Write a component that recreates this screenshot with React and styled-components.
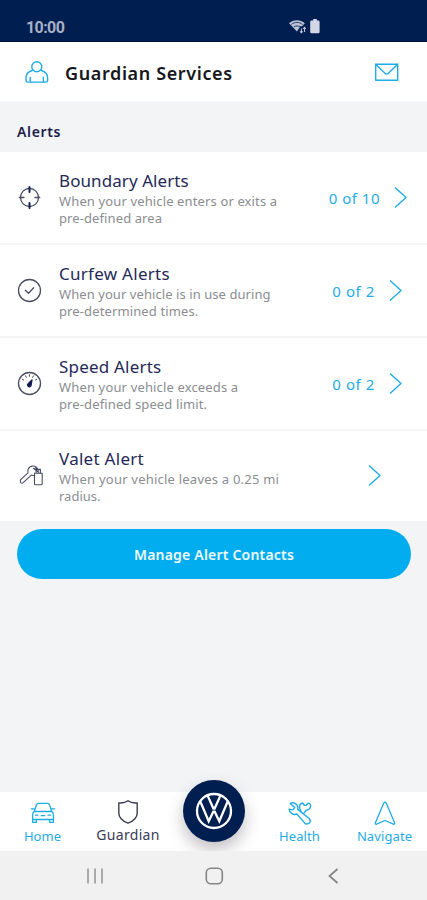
import React from "react";
import styled, { createGlobalStyle } from "styled-components";

const GlobalStyle = createGlobalStyle`
  * { box-sizing: border-box; }
  body { margin: 0; font-family: "Noto Sans", "Open Sans", sans-serif; }
`;

const blue = "#1face6";
const navy = "#001e50";

const Screen = styled.div`
  display: flex;
  flex-direction: column;
  width: 427px;
  height: 900px;
  background: #f2f4f6;
  overflow: hidden;
`;

const StatusBar = styled.header`
  display: flex;
  align-items: center;
  gap: 3px;
  height: 42px;
  padding: 12px 107px 0 26px;
  background: ${navy};
  border-bottom: 1px solid #00103c;
`;

const Clock = styled.span`
  flex: 1;
  padding-top: 2px;
  font: 700 16px/20px Roboto, sans-serif;
  letter-spacing: -0.6px;
  color: #a9b0c6;
`;

const Header = styled.div`
  display: flex;
  align-items: center;
  height: 60px;
  padding: 0 27px 0 24px;
  background: #fff;
  border-bottom: 1px solid #f7f8f9;
`;

const Title = styled.h1`
  flex: 1;
  margin: 2px 0 0 16px;
  font-size: 18px;
  line-height: 24px;
  font-weight: 600;
  letter-spacing: 0.62px;
  color: #15171c;
`;

const SectionTitle = styled.h2`
  height: 50px;
  margin: 0;
  padding: 20px 17px 0;
  font-size: 14px;
  line-height: 20px;
  font-weight: 600;
  letter-spacing: 0.65px;
  color: #1b1d4c;
`;

const Row = styled.section`
  display: flex;
  align-items: center;
  height: ${(p) => p.$height}px;
  padding: 0 ${(p) => p.$right}px 0 17px;
  background: #fff;
  border-bottom: ${(p) => (p.$last ? 0 : 2)}px solid #f4f5f7;
`;

const RowIcon = styled.div`
  display: flex;
  width: 42px;
  padding-bottom: 1px;
  color: #4a4e63;
`;

const RowText = styled.div`
  flex: 1;
  white-space: nowrap;
`;

const RowTitle = styled.h3`
  margin: 0;
  font-size: 17px;
  line-height: 24px;
  font-weight: 400;
  letter-spacing: ${(p) => p.$track}px;
  color: #252957;
`;

const RowLine = styled.div`
  font-size: 13px;
  line-height: 17px;
  letter-spacing: ${(p) => p.$track}px;
  color: #8b8d91;
`;

const Count = styled.span`
  margin-right: 14px;
  font-size: 15px;
  line-height: 20px;
  letter-spacing: ${(p) => p.$track}px;
  color: ${blue};
`;

const ManageButton = styled.button`
  height: 50px;
  margin: 8px 16px 0 17px;
  padding: 1px 0 0;
  border: 0;
  border-radius: 25px;
  background: #02adef;
  color: #effaff;
  font: 600 14px/20px "Noto Sans", sans-serif;
  letter-spacing: 0.2px;
`;

const TabBar = styled.nav`
  display: grid;
  grid-template-columns: 85px 86px 86px 85px 85px;
  height: 59px;
  margin-top: auto;
  background: #fff;
`;

const Tab = styled.a`
  display: flex;
  flex-direction: column;
  align-items: center;
  padding-top: ${(p) => (p.$active ? 7 : 8)}px;
  color: ${(p) => (p.$active ? "#3a3d55" : blue)};
`;

const TabLabel = styled.span`
  margin-top: 1px;
  font-size: ${(p) => p.$size}px;
  line-height: 18px;
  letter-spacing: ${(p) => p.$track}px;
  white-space: nowrap;
`;

const LogoButton = styled.div`
  justify-self: center;
  display: flex;
  align-items: center;
  justify-content: center;
  width: 62px;
  height: 62px;
  margin-top: -12px;
  border-radius: 50%;
  background: ${navy};
  box-shadow: 0 8px 16px rgba(60, 45, 55, 0.3);
`;

const SystemBar = styled.footer`
  position: relative;
  z-index: 1;
  display: grid;
  grid-template-columns: 108px 1fr 108px;
  align-items: center;
  height: 49px;
  padding: 1px 40px 0 41px;
  background: #f1f1f1;
`;

const Icon = ({ w, h = w, sw = 1.3, children }) => (
  <svg
    width={w}
    height={h}
    viewBox={`0 0 ${w} ${h}`}
    fill="none"
    stroke="currentColor"
    strokeWidth={sw}
    strokeLinecap="round"
    strokeLinejoin="round"
  >
    {children}
  </svg>
);

const Accent = styled.span`
  display: flex;
  color: ${blue};
`;

const SystemKey = styled.span`
  display: flex;
  justify-content: center;
  color: ${(p) => p.$tone};
`;

const Chevron = () => (
  <Accent>
    <Icon w={13} h={22} sw={1.4}>
      <path d="M1 .5 12 10.500 1 20.500" strokeLinecap="butt" />
    </Icon>
  </Accent>
);

const Target = () => (
  <Icon w={25}>
    <circle cx="12.5" cy="12.5" r="9" />
    <path d="M12.5 2v5M12.5 18v5" stroke="#17205c" strokeWidth="2" />
    <path d="M2.3 12.5H7M18 12.5h4.7" />
  </Icon>
);

const CheckCircle = () => (
  <Icon w={25}>
    <circle cx="12.5" cy="12.5" r="11" />
    <path d="m8.3 12.2 3.2 3.1 5.2-5.6" />
  </Icon>
);

const Gauge = () => (
  <Icon w={25}>
    <circle cx="12.5" cy="12.5" r="11" />
    <path d="M5.2 8.2 6.6 9M8.5 4.8l.9 1.6M12.5 3.7v1.6M16.5 4.8l-.9 1.6M19.8 8.2 18.4 9" strokeWidth="1" />
    <path d="m15 9-1 5.6c-.5 1.9-3.5 1.5-3.5-.5 0-.8.5-1.3 1.1-1.8Z" fill="#111a50" stroke="#111a50" />
  </Icon>
);

const Keys = () => (
  <Icon w={29} h={25} sw={1.1}>
    <path d="M3.4 19.3v-2.4l7.6-7.1c-.8-3.4.9-6.1 3.8-6.7 2.5-.4 4.7.6 5.6 2.7M3.4 19.3c.8 1.2 1.9 1.1 2.8.3l8-7.5c1.1.5 2.2.5 3.3.1" />
    <path d="m16.5 5.3 5.2 3.9M18.4 4.9l3.4 2.3" stroke="#29305f" />
    <path d="M17.5 10.3h7.7v10.6c0 .5-.4.9-.9.9h-5.9c-.5 0-.9-.4-.9-.9ZM19.1 10V6.4h4.3V10" />
  </Icon>
);

const Person = () => (
  <Icon w={25} h={26} sw={1.4}>
    <circle cx="12.8" cy="7.7" r="5" />
    <path d="M8.3 11.5C4.2 12.6 2 15.2 2 18.8v2.6c0 1.1.7 1.7 1.7 1.7h18.2c1 0 1.7-.6 1.7-1.7v-2.6c0-3.6-2.2-6.2-6.3-7.3M6.2 18.2V23M19.4 18.2V23" />
  </Icon>
);

const Mail = () => (
  <Icon w={26} h={20} sw={1.4}>
    <path d="M1.7 2.3h22v16h-22ZM1.7 2.3l9.3 9c1 .9 2.4.9 3.4 0l9.3-9" />
  </Icon>
);

const Wifi = () => (
  <svg width="18" height="16" viewBox="0 0 18 16" fill="#bcc2d6">
    <path d="M0 4.2C4.2.1 11.6.1 15.8 4.2l-2.7 3.1-1.5-.4-3.6 5.6Z" />
    <path d="M2.3 5.5c3.3-2.8 8.2-2.8 11.3 0M4.7 8c2-1.4 4.5-1.4 6.4 0" fill="none" stroke={navy} strokeWidth="0.8" />
    <path d="M12.4 13.5v-4m-1.4 2.8 1.4 1.5 1.4-1.5M15.5 13V8.4M14.2 9.8l1.3-1.5 1.3 1.5" fill="none" stroke="#bcc2d6" strokeWidth="1.1" />
  </svg>
);

const Battery = () => (
  <svg width="10" height="15" viewBox="0 0 10 15" fill="#d2d6e5">
    <path d="M3.2 0h3.6v1.5h1.4c.8 0 1.4.6 1.4 1.4v10c0 .8-.6 1.4-1.4 1.4H1.6c-.8 0-1.4-.6-1.4-1.4v-10c0-.8.6-1.4 1.4-1.4h1.6Z" />
  </svg>
);

const Car = () => (
  <Icon w={26} sw={1.3}>
    <path d="M4.2 11.5 6.5 4.8c.3-.9.9-1.4 1.8-1.4h9.4c.9 0 1.5.5 1.8 1.4l2.3 6.7M4.2 11.5h17.6M4.2 11.5c-1.1.8-1.6 1.8-1.6 3.2v7.6h3.8v-2.8h13.2v2.8h3.8v-7.6c0-1.4-.5-2.4-1.6-3.2M1.3 8.8h3M21.7 8.8h3M2.8 19.5h20.4M5.5 15.2h2.4M18.1 15.2h2.4M11.3 15.7h3.4" />
  </Icon>
);

const Shield = () => (
  <Icon w={26} sw={1.4}>
    <path d="M13 1.7c2.4 1.9 5.4 2.6 9.2 2.2v10c0 4.6-3.6 8-9.2 10.3-5.6-2.3-9.2-5.7-9.2-10.3v-10c3.8.4 6.8-.3 9.2-2.2Z" />
  </Icon>
);

const Tools = () => (
  <Icon w={26} sw={1.4}>
    <path d="M3.2 3.4C6.5 1.9 10 3.6 10.8 6.8c.2 1 .1 1.7-.1 2.6l11.2 8.900c1.500 1.400 1.700 3.400.4 4.800-1.400 1.400-3.400 1.200-4.700-.2L9.900 14c-3.700 1.400-7.300-.9-7.800-4.900l3.600.8 2-2.300Z" />
    <path d="m14 11.600-1.300-3.400c-.6-2.600.5-4.600 2.900-5.200l1.800 2.300 1.600.1 2.200-2.300c2 .3 2.800 1.800 2.300 3.800-.5 1.900-2 3.300-4.300 3.400l-2.500 3.100" />
  </Icon>
);

const Arrow = () => (
  <Icon w={26} sw={1.3}>
    <path d="M13 2.2c-.6 0-1 .3-1.2.9L3.300 23c-.3.9.5 1.500 1.300 1.100L13 20.500l8.400 3.600c.8.4 1.600-.2 1.300-1.100L14.200 3.100c-.2-.6-.6-.9-1.200-.9Z" />
  </Icon>
);

const Logo = () => (
  <svg width="38" height="38" viewBox="0 0 38 38" fill="none" stroke="#fff" strokeWidth="2.3">
    <circle cx="19" cy="19" r="17" />
    <path d="m12.500 3.400 5.900 13.100h1.200l5.900-13.100M5.200 9.300l8.500 20 4.600-9.600h1.400l4.600 9.600 8.500-20" />
  </svg>
);

const alerts = [
  { icon: <Target />, title: "Boundary Alerts", tt: 0.08, lines: [["When your vehicle enters or exits a", 0.13], ["pre-defined area", 0.1]], count: "0 of 10", ct: 0.5, height: 93, right: 20 },
  { icon: <CheckCircle />, title: "Curfew Alerts", tt: 0.28, lines: [["When your vehicle is in use during", 0.07], ["pre-determined times.", 0.12]], count: "0 of 2", ct: 0.6, height: 93, right: 25 },
  { icon: <Gauge />, title: "Speed Alerts", tt: 0.2, lines: [["When your vehicle exceeds a", 0.15], ["pre-defined speed limit.", 0.12]], count: "0 of 2", ct: 0.6, height: 93, right: 25 },
  { icon: <Keys />, title: "Valet Alert", tt: 0.28, lines: [["When your vehicle leaves a 0.25 mi", 0.22], ["radius.", 0]], height: 90, right: 46 },
];

export default function App() {
  return (
    <Screen>
      <GlobalStyle />
      <StatusBar>
        <Clock>10:00</Clock>
        <Wifi />
        <Battery />
      </StatusBar>
      <Header>
        <Accent><Person /></Accent>
        <Title>Guardian Services</Title>
        <Accent><Mail /></Accent>
      </Header>
      <SectionTitle>Alerts</SectionTitle>
      {alerts.map((a, i) => (
        <Row key={a.title} $height={a.height} $right={a.right} $last={i === alerts.length - 1}>
          <RowIcon>{a.icon}</RowIcon>
          <RowText>
            <RowTitle $track={a.tt}>{a.title}</RowTitle>
            {a.lines.map(([text, track]) => (
              <RowLine key={text} $track={track}>{text}</RowLine>
            ))}
          </RowText>
          {a.count && <Count $track={a.ct}>{a.count}</Count>}
          <Chevron />
        </Row>
      ))}
      <ManageButton>Manage Alert Contacts</ManageButton>
      <TabBar>
        <Tab><Car /><TabLabel $size={13} $track={0.05}>Home</TabLabel></Tab>
        <Tab $active><Shield /><TabLabel $size={14} $track={0.3}>Guardian</TabLabel></Tab>
        <LogoButton><Logo /></LogoButton>
        <Tab><Tools /><TabLabel $size={13} $track={0.1}>Health</TabLabel></Tab>
        <Tab><Arrow /><TabLabel $size={13} $track={0.1}>Navigate</TabLabel></Tab>
      </TabBar>
      <SystemBar>
        <SystemKey $tone="#999">
          <Icon w={22} h={20} sw={1.6}><path d="M4 2.500v15M11 2.500v15M18 2.500v15" strokeLinecap="butt" /></Icon>
        </SystemKey>
        <SystemKey $tone="#858585">
          <Icon w={20} h={20} sw={1.6}><rect x="2.300" y="2.300" width="16" height="15.400" rx="4.500" /></Icon>
        </SystemKey>
        <SystemKey $tone="#858585">
          <Icon w={12} h={20} sw={1.7}><path d="m10.500 3-8 7 8 7" strokeLinecap="butt" strokeLinejoin="miter" /></Icon>
        </SystemKey>
      </SystemBar>
    </Screen>
  );
}
